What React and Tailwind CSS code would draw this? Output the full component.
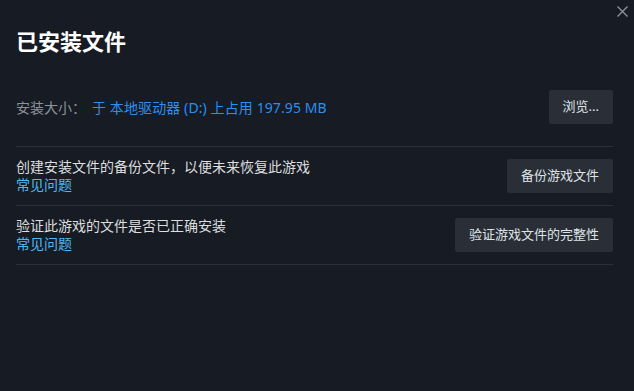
import React from 'react';

const Button = ({ children }) => (
  <button className="h-[34px] px-[14px] rounded-[2px] bg-[#2a2e36] text-[13px] text-[#dfe3e6] shrink-0 hover:bg-[#3d4450]">
    {children}
  </button>
);

const App = () => {
  const rows = [
    { text: '创建安装文件的备份文件，以便未来恢复此游戏', button: '备份游戏文件' },
    { text: '验证此游戏的文件是否已正确安装', button: '验证游戏文件的完整性' },
  ];

  return (
    <div
      className="w-[634px] h-[391px] bg-[#171b23] text-[#dcdedf] relative overflow-hidden"
      style={{ fontFamily: '"Noto Sans", "Noto Sans CJK SC", sans-serif' }}
    >
      {/* Close */}
      <button className="absolute right-[2px] top-[1px] w-[20px] h-[20px] flex items-center justify-center text-[#8b929a]">
        <svg width="11" height="11" viewBox="0 0 11 11" fill="none" stroke="currentColor" strokeWidth="1.4">
          <path d="M0.5 0.5 L10.5 10.5 M10.5 0.5 L0.5 10.5" />
        </svg>
      </button>

      <div className="pl-[16px] pr-[21px] pt-[26px]">
        <h1 className="text-[22px] font-bold text-white leading-[30px]">已安装文件</h1>

        {/* Install size */}
        <div className="flex items-center justify-between mt-[34px] pb-[22px] border-b border-[#2a2f38]">
          <div className="flex items-center text-[14px]">
            <span className="text-[#8b929a] w-[76px]">安装大小：</span>
            <span className="text-[#2b8ff0] tracking-[0.1px]">于 本地驱动器 (D:) 上占用 197.95 MB</span>
          </div>
          <Button>浏览...</Button>
        </div>

        {rows.map((r) => (
          <div
            key={r.button}
            className="flex items-center justify-between py-[11px] border-b border-[#2a2f38]"
          >
            <div className="text-[14px] leading-[18px]">
              <div className="text-[#dcdedf]">{r.text}</div>
              <a href="#" className="text-[#4fb8f0] block">常见问题</a>
            </div>
            <Button>{r.button}</Button>
          </div>
        ))}
      </div>
    </div>
  );
};

export default App;
